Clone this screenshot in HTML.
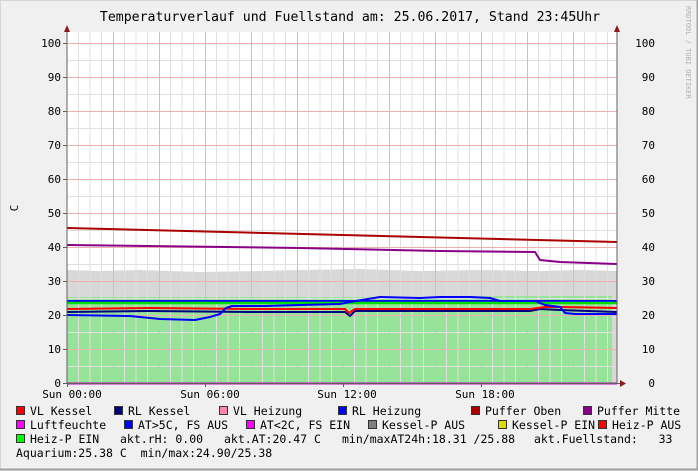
<!DOCTYPE html>
<html><head><meta charset="utf-8"><style>
html,body{margin:0;padding:0;background:#f0f0f0;}
svg{display:block;font-family:"DejaVu Sans Mono","Liberation Mono",monospace;}
</style></head><body>
<svg width="698" height="471" viewBox="0 0 698 471" xmlns="http://www.w3.org/2000/svg">
<rect x="0" y="0" width="698" height="471" fill="#f0f0f0"/>
<path d="M0.5 470.5V0.5H697.5" stroke="#d6d6d6" fill="none"/>
<path d="M0.5 470V469.5H697.5V0" stroke="#a0a0a0" stroke-width="2" fill="none"/>
<text x="350" y="21" font-size="13.2" text-anchor="middle" fill="#000">Temperaturverlauf und Fuellstand am: 25.06.2017, Stand 23:45Uhr</text>
<text transform="translate(686,6) rotate(90)" font-size="7" fill="#b0b0b0">RRDTOOL / TOBI OETIKER</text>
<text transform="translate(18,208) rotate(-90)" font-size="11" text-anchor="middle" fill="#000">C</text>
<rect x="67" y="32" width="550" height="351" fill="#fff"/>
<path d="M67 383V270L100 271L140 270L200 272L260 271L300 270L360 269L420 271L480 270L540 271L580 270L617 271V383Z" fill="#d8d8d8"/>
<path d="M67 383V297L200 297L300 297L420 297L470 296L540 296L612 296V383Z" fill="#98e39a"/>
<g stroke-width="1">
<g stroke="#e0e0e0">
<path d="M78.5 32V383M90 32V383M101.5 32V383M124.5 32V383M136 32V383M147.5 32V383M170.5 32V383M182 32V383M193.5 32V383M216.5 32V383M228 32V383M239.5 32V383M262.5 32V383M274 32V383M285.5 32V383M308.5 32V383M320 32V383M331.5 32V383M354.5 32V383M366 32V383M377.5 32V383M400.5 32V383M412 32V383M423.5 32V383M446.5 32V383M458 32V383M469.5 32V383M492.5 32V383M504 32V383M515.5 32V383M538.5 32V383M550 32V383M561.5 32V383M584.5 32V383M596 32V383M607.5 32V383"/>
<path d="M67 366.5H617M67 332.5H617M67 298.5H617M67 264.5H617M67 230.5H617M67 196.5H617M67 162.5H617M67 128.5H617M67 94.5H617M67 60.5H617"/>
</g>
<g stroke="#f0b0b0">
<path d="M113.5 32V383M159.5 32V383M205.5 32V383M251.5 32V383M297.5 32V383M343.5 32V383M389.5 32V383M435.5 32V383M481.5 32V383M527.5 32V383M573.5 32V383"/>
<path d="M67 349.5H617M67 315.5H617M67 281.5H617M67 247.5H617M67 213.5H617M67 179.5H617M67 145.5H617M67 111.5H617M67 77.5H617M67 43.5H617"/>
</g>
</g>
<g fill="none" stroke-width="2" stroke-linejoin="round">
<path d="M67 228L617 242" stroke="#aa0000"/>
<path d="M67 245L300 248L440 251L535 252L540 260L560 262L617 264" stroke="#880088"/>
<path d="M67 301L617 301" stroke="#0000ff"/>
<path d="M67 303L617 303" stroke="#00dd00" stroke-width="2.5"/>
<path d="M67 312L150 311L250 312L345 312L350 316L355 311L530 311L540 309L560 310L617 312" stroke="#000080"/>
<path d="M67 309L150 308L250 309L345 309L349 313L355 309L530 309L545 307L560 307L617 308" stroke="#ff0000"/>
<path d="M67 315L130 316L160 319L195 320L210 317L220 314L226 308L232 306L245 306L265 306L300 305L340 304L350 302L380 297L420 298L440 297L470 297L490 298L500 301L535 301L545 305L560 307L565 313L575 314L617 314" stroke="#0000ff"/>
<path d="M67 383.5H617" stroke="#cc00cc" stroke-width="2"/>
</g>
<path d="M67 29V383" stroke="#606060" stroke-width="1"/>
<path d="M617 29V383" stroke="#606060" stroke-width="1"/>
<path d="M67 383.5H620" stroke="#606060" stroke-width="1"/>
<path d="M64 32L67 25L70 32Z M614 32L617 25L620 32Z M620 380L626 383.5L620 387Z" fill="#8b1a1a"/>
<g stroke="#606060"><path d="M63 43.5H67M63 77.5H67M63 111.5H67M63 145.5H67M63 179.5H67M63 213.5H67M63 247.5H67M63 281.5H67M63 315.5H67M63 349.5H67M63 383.5H67"/>
<path d="M67.5 383V387M205.5 383V387M343.5 383V387M481.5 383V387"/></g>
<g font-size="11" fill="#000" text-anchor="end">
<text x="61" y="47">100</text><text x="61" y="81">90</text><text x="61" y="115">80</text><text x="61" y="149">70</text><text x="61" y="183">60</text><text x="61" y="217">50</text><text x="61" y="251">40</text><text x="61" y="285">30</text><text x="61" y="319">20</text><text x="61" y="353">10</text><text x="61" y="387">0</text>
</g>
<g font-size="11" fill="#000" text-anchor="end">
<text x="655" y="47">100</text><text x="655" y="81">90</text><text x="655" y="115">80</text><text x="655" y="149">70</text><text x="655" y="183">60</text><text x="655" y="217">50</text><text x="655" y="251">40</text><text x="655" y="285">30</text><text x="655" y="319">20</text><text x="655" y="353">10</text><text x="655" y="387">0</text>
</g>
<g font-size="11" fill="#000" text-anchor="middle">
<text x="72" y="398">Sun 00:00</text><text x="210" y="398">Sun 06:00</text><text x="347" y="398">Sun 12:00</text><text x="485" y="398">Sun 18:00</text>
</g>
<g stroke="#333" stroke-width="1">
<rect x="16.5" y="406.5" width="8" height="8" fill="#ff0000"/>
<rect x="114.5" y="406.5" width="8" height="8" fill="#000080"/>
<rect x="219.5" y="406.5" width="8" height="8" fill="#ff88aa"/>
<rect x="338.5" y="406.5" width="8" height="8" fill="#0000ff"/>
<rect x="471.5" y="406.5" width="8" height="8" fill="#aa0000"/>
<rect x="583.5" y="406.5" width="8" height="8" fill="#880088"/>
<rect x="16.5" y="420.5" width="8" height="8" fill="#ff00ff"/>
<rect x="124.5" y="420.5" width="8" height="8" fill="#0000ff"/>
<rect x="246.5" y="420.5" width="8" height="8" fill="#ff00ff"/>
<rect x="368.5" y="420.5" width="8" height="8" fill="#808080"/>
<rect x="498.5" y="420.5" width="8" height="8" fill="#dddd00"/>
<rect x="598.5" y="420.5" width="8" height="8" fill="#ff0000"/>
<rect x="16.5" y="434.5" width="8" height="8" fill="#00ff00"/>
</g>
<g font-size="11.5" fill="#000">
<text x="30" y="415">VL Kessel</text>
<text x="128" y="415">RL Kessel</text>
<text x="233" y="415">VL Heizung</text>
<text x="352" y="415">RL Heizung</text>
<text x="485" y="415">Puffer Oben</text>
<text x="597" y="415">Puffer Mitte</text>
<text x="30" y="429">Luftfeuchte</text>
<text x="138" y="429">AT&gt;5C, FS AUS</text>
<text x="260" y="429">AT&lt;2C, FS EIN</text>
<text x="382" y="429">Kessel-P AUS</text>
<text x="512" y="429">Kessel-P EIN</text>
<text x="612" y="429">Heiz-P AUS</text>
<text x="30" y="443">Heiz-P EIN</text>
<text x="120" y="443">akt.rH: 0.00</text>
<text x="224" y="443">akt.AT:20.47 C</text>
<text x="342" y="443">min/maxAT24h:18.31 /25.88</text>
<text x="534" y="443">akt.Fuellstand:&#160;&#160;&#160;33</text>
<text x="16" y="457">Aquarium:25.38 C&#160;&#160;min/max:24.90/25.38</text>
</g>
</svg>
</body></html>
